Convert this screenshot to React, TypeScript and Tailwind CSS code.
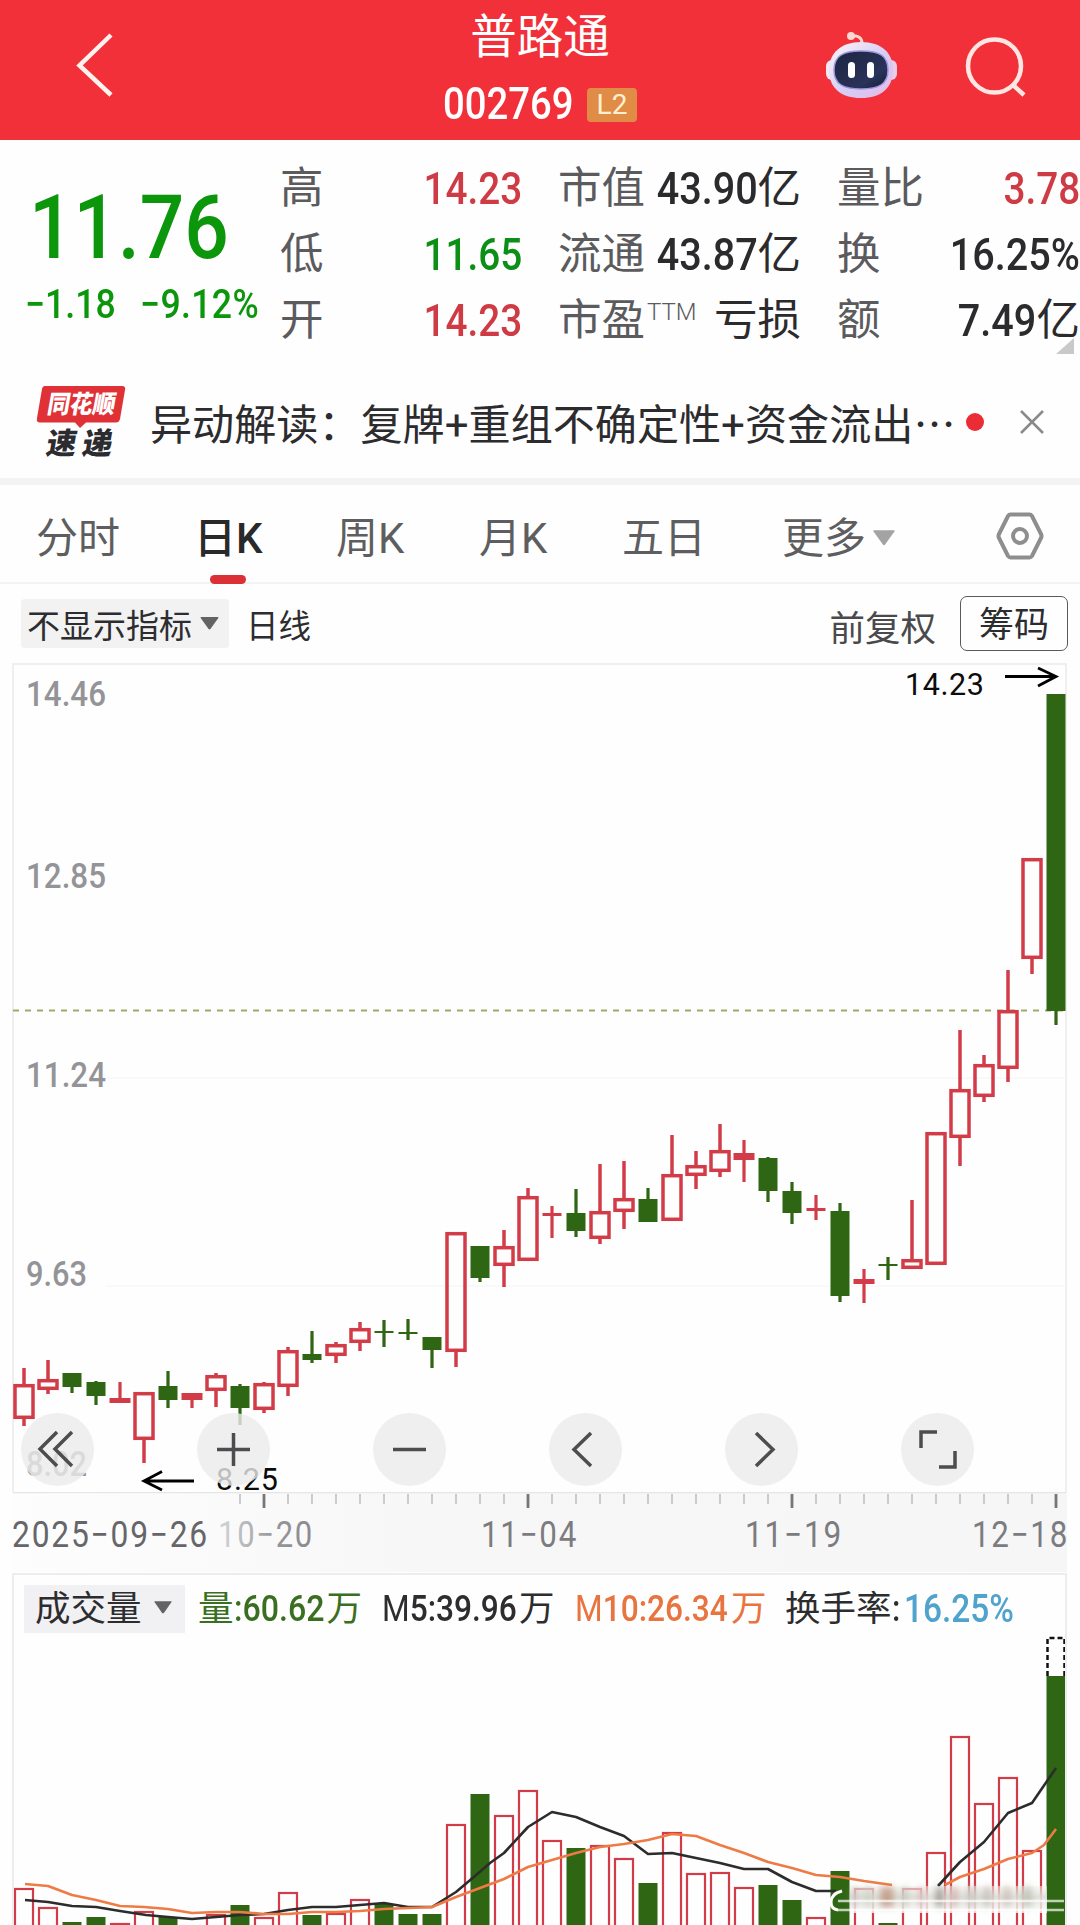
import React from 'react';
import clsx from 'clsx';

type Candle = { up: boolean; high: number; top: number; bottom: number; low: number };

const STEP = 24;
const centerX = (i: number) => STEP + i * STEP;

// [direction, high, body top, body bottom, low]
const RAW: [string, number, number, number, number][] = [
  ['r', 1368, 1384, 1419, 1426],
  ['r', 1360, 1379, 1390, 1394],
  ['g', 1373, 1373, 1387, 1393],
  ['g', 1381, 1382, 1396, 1405],
  ['r', 1382, 1398, 1403, 1403],
  ['r', 1392, 1392, 1440, 1463],
  ['g', 1371, 1386, 1400, 1408],
  ['r', 1393, 1393, 1400, 1408],
  ['r', 1373, 1375, 1391, 1407],
  ['g', 1384, 1386, 1408, 1425],
  ['r', 1382, 1383, 1410, 1413],
  ['r', 1347, 1350, 1387, 1396],
  ['g', 1331, 1354, 1360, 1363],
  ['r', 1342, 1344, 1356, 1363],
  ['r', 1322, 1328, 1343, 1351],
  ['g', 1320, 1331, 1333, 1347],
  ['g', 1319, 1332, 1334, 1340],
  ['g', 1337, 1337, 1350, 1368],
  ['r', 1232, 1232, 1352, 1367],
  ['g', 1246, 1246, 1278, 1282],
  ['r', 1230, 1246, 1266, 1287],
  ['r', 1188, 1196, 1261, 1261],
  ['r', 1206, 1213, 1216, 1238],
  ['g', 1189, 1213, 1231, 1237],
  ['r', 1164, 1211, 1239, 1244],
  ['r', 1161, 1198, 1212, 1229],
  ['g', 1188, 1199, 1222, 1222],
  ['r', 1135, 1174, 1221, 1221],
  ['r', 1151, 1165, 1176, 1189],
  ['r', 1124, 1150, 1172, 1177],
  ['r', 1140, 1153, 1160, 1182],
  ['g', 1157, 1158, 1191, 1202],
  ['g', 1182, 1191, 1213, 1224],
  ['r', 1195, 1208, 1211, 1220],
  ['g', 1203, 1211, 1296, 1302],
  ['r', 1269, 1279, 1284, 1303],
  ['g', 1257, 1264, 1266, 1280],
  ['r', 1200, 1259, 1269, 1269],
  ['r', 1132, 1132, 1265, 1265],
  ['r', 1030, 1089, 1138, 1166],
  ['r', 1055, 1064, 1097, 1102],
  ['r', 970, 1010, 1069, 1082],
  ['r', 858, 858, 959, 974],
  ['g', 694, 694, 1011, 1025],
];

const CANDLES: Candle[] = RAW.map(([d, high, top, bottom, low]) => ({ up: d === 'r', high, top, bottom, low }));

const VOLUME_TOPS = [
  1888, 1907, 1922, 1917, 1923, 1911, 1917, 1925, 1914, 1905, 1917, 1892, 1915, 1913, 1899, 1904, 1914, 1914, 1824,
  1794, 1815, 1790, 1840, 1848, 1845, 1858, 1883, 1832, 1873, 1872, 1887, 1885, 1900, 1917, 1871, 1888, 1923, 1888,
  1852, 1736, 1803, 1777, 1850, 1676,
];

const MA5_A =
  '25,1900 48,1902 72,1906 96,1907 120,1911 146,1915 168,1917 192,1919 216,1917 240,1915 264,1914 288,1910 312,1907 336,1907 360,1905 384,1903 408,1907 432,1907 456,1892 475,1876 490,1863 504,1853 528,1827 552,1812 576,1817 600,1827 624,1836 648,1854 672,1853 696,1858 720,1863 744,1869 768,1869 792,1882 816,1891 836,1891';
const MA5_B = '938,1886 960,1862 984,1842 1008,1813 1032,1803 1056,1768';
const MA10_A =
  '25,1884 48,1886 72,1895 96,1900 120,1906 144,1907 168,1909 192,1913 216,1912 240,1912 264,1914 288,1914 312,1912 336,1912 360,1911 384,1909 408,1908 432,1907 456,1897 480,1888 504,1879 528,1867 552,1860 576,1853 600,1847 624,1844 648,1840 672,1834 696,1836 720,1845 744,1853 768,1862 792,1868 816,1875 840,1877 864,1881 892,1885';
const MA10_B = '945,1885 960,1877 984,1869 1008,1859 1032,1853 1044,1845 1056,1829';

// [x, width, colour] of the soft streaks at the foot of the volume pane
const STREAKS: [number, number, string][] = [
  [853, 4, '#b9a8a6'],
  [864, 8, '#c5cbbb'],
  [880, 14, '#b98d74'],
  [902, 6, '#b9bcb0'],
  [918, 6, '#d8b4b4'],
  [937, 5, '#6d5a54'],
  [950, 8, '#cda7a3'],
  [966, 10, '#c4c3bb'],
  [983, 8, '#bdb5af'],
  [1003, 8, '#c8b6b0'],
  [1022, 10, '#b9bbae'],
];

const RED = '#d23c48';
const GREEN = '#2f6613';

// Digits are set narrow; the outer box keeps the condensed width in the flow.
function Num({ children, className, right = false }: { children: React.ReactNode; className?: string; right?: boolean }) {
  return (
    <span className={clsx('inline-flex shrink-0 whitespace-nowrap font-medium', right ? 'justify-end' : 'justify-start', className)}>
      <span className={clsx('inline-block scale-x-[.88]', right ? 'origin-right' : 'origin-left')}>{children}</span>
    </span>
  );
}

function Caret({ className }: { className?: string }) {
  return (
    <svg viewBox="0 0 20 14" className={className} fill="currentColor">
      <path d="M1 0H19Q20 0 19.5 1L11 13Q10 14 9 13L.5 1Q0 0 1 0Z" />
    </svg>
  );
}

function Header() {
  return (
    <header className="flex h-[140px] items-start bg-[#f23039] text-white">
      <svg className="ml-[60px] h-[140px] w-[70px]" viewBox="60 0 70 140" fill="none" stroke="#fff3f0" strokeWidth="4.5">
        <path d="M111 35L79.500 65.500L111 95" />
      </svg>
      <div className="ml-[313px] flex w-[194px] flex-col items-center">
        <div className="mt-[10px] text-[46.500px] leading-[54px]">普路通</div>
        <div className="mt-[15px] flex items-center gap-[14px]">
          <Num className="w-[130px] text-[43.500px] leading-[52px]">002769</Num>
          <span className="flex h-[34px] w-[50px] items-center justify-center rounded-[4px] bg-[#e08c47] text-[28px] leading-none text-[#fff1d2]">
            L2
          </span>
        </div>
      </div>
      <svg className="ml-auto mr-[40px] h-[140px] w-[240px]" viewBox="800 0 240 140" fill="none">
        <defs>
          <linearGradient id="shell" x1="0" y1="0" x2="1" y2="1">
            <stop offset="0" stopColor="#fff5f8" />
            <stop offset=".55" stopColor="#d5cdf5" />
            <stop offset="1" stopColor="#e5b9e6" />
          </linearGradient>
          <linearGradient id="visor" x1="0" y1="0" x2="1" y2="1">
            <stop offset="0" stopColor="#1b2441" />
            <stop offset=".7" stopColor="#2a3358" />
            <stop offset="1" stopColor="#141b38" />
          </linearGradient>
        </defs>
        <path d="M862 43C862 38 858 35 851 36" stroke="#ffd6d0" strokeWidth="3" />
        <circle cx="851" cy="36" r="4" fill="#ffd6d0" />
        <rect x="826" y="60" width="12" height="20" rx="6" fill="#f6e6f3" />
        <rect x="885" y="60" width="12" height="20" rx="6" fill="#e9cdea" />
        <path d="M861 42C882 42 893 53 893 70C893 88 881 98 861 98C841 98 829 88 829 70C829 53 841 42 861 42Z" fill="url(#shell)" />
        <path
          d="M861 51C880 51 888 56 888 70C888 84 879 89 861 89C843 89 834 84 834 70C834 56 843 51 861 51Z"
          fill="url(#visor)"
          stroke="#9a95dc"
          strokeWidth="1.500"
        />
        <rect x="848" y="62" width="7" height="16" rx="3.500" fill="#fff" />
        <rect x="867" y="62" width="7" height="16" rx="3.500" fill="#fff" />
        <circle cx="994.500" cy="66" r="26.500" stroke="#ffe6e2" strokeWidth="4.500" />
        <path d="M1013 85L1024 95" stroke="#ffe6e2" strokeWidth="4.500" />
      </svg>
    </header>
  );
}

function Quote() {
  const label = 'text-[#5b5b5e]';
  const row = 'flex h-[66px] items-center justify-between';
  return (
    <section className="relative flex h-[222px] pt-[16px] text-[43.500px] leading-[66px] text-[#2b2b2e]">
      <div className="w-[280px] text-[#0b960b]">
        <Num className="ml-[29px] mt-[24px] w-[204px] text-[89px] leading-[96px]">11.76</Num>
        <div className="mt-[4px] flex pl-[25px] text-[40.500px] leading-[46px]">
          <Num className="w-[115px]">−1.18</Num>
          <Num className="w-[120px] tracking-[.4px]">−9.12%</Num>
        </div>
      </div>
      <div className="w-[242px]">
        <div className={row}>
          <span className={label}>高</span>
          <Num right className="text-[44px] text-[#cf3b45]">14.23</Num>
        </div>
        <div className={row}>
          <span className={label}>低</span>
          <Num right className="text-[44px] text-[#0b8f16]">11.65</Num>
        </div>
        <div className={row}>
          <span className={label}>开</span>
          <Num right className="text-[44px] text-[#cf3b45]">14.23</Num>
        </div>
      </div>
      <div className="ml-[36px] w-[243px]">
        <div className={row}>
          <span className={label}>市值</span>
          <span className="flex">
            <Num right className="w-[99px] text-[45px]">43.90</Num>亿
          </span>
        </div>
        <div className={row}>
          <span className={label}>流通</span>
          <span className="flex">
            <Num right className="w-[99px] text-[45px]">43.87</Num>亿
          </span>
        </div>
        <div className={row}>
          <span className={clsx(label, 'flex')}>
            市盈<span className="-mt-[9px] ml-[2px] text-[24px] font-light">TTM</span>
          </span>
          亏损
        </div>
      </div>
      <div className="ml-[36px] w-[243px]">
        <div className={row}>
          <span className={label}>量比</span>
          <Num right className="text-[44px] text-[#cf3b45]">3.78</Num>
        </div>
        <div className={row}>
          <span className={label}>换</span>
          <Num right className="text-[45px]">16.25%</Num>
        </div>
        <div className={row}>
          <span className={label}>额</span>
          <span className="flex">
            <Num right className="w-[80px] text-[45px]">7.49</Num>亿
          </span>
        </div>
      </div>
      <svg className="absolute right-[6px] top-[198px] h-4 w-[18px]" viewBox="0 0 18 16">
        <path d="M18 0V16H0Z" fill="#c9c9c9" />
      </svg>
    </section>
  );
}

function Notice() {
  return (
    <section className="flex h-[116px] items-start pl-9">
      <svg className="mt-[22px] h-[78px] w-[92px]" viewBox="36 384 92 78">
        <path d="M45 386H122Q126 386 125 390L120 419Q119 422.500 116 422.500H86L80 428L75 422.500H40Q36 422.500 37 418L42 389Q42.500 386 45 386Z" fill="#e03137" />
        <text x="47" y="413" fontSize="25" fontWeight="900" fill="#fff" textLength="68" lengthAdjust="spacingAndGlyphs" transform="translate(72 0) skewX(-10)">
          同花顺
        </text>
        <text x="47" y="454" fontSize="30" fontWeight="900" fill="#2b2b30" textLength="66" lengthAdjust="spacing" transform="translate(78 0) skewX(-10)">
          速递
        </text>
      </svg>
      <div className="ml-[22px] mt-[27px] w-[812px] whitespace-nowrap text-[42.100px] leading-[66px] text-[#2c2c2e]">
        异动解读：复牌+重组不确定性+资金流出
        <span className="font-['Noto_Sans_CJK_SC']">…</span>
      </div>
      <span className="ml-[4px] mt-[51px] size-[18px] rounded-full bg-[#ea2c36]" />
      <svg className="ml-9 mt-[48px] size-6" viewBox="0 0 24 24" stroke="#8a8a8a" strokeWidth="2.500">
        <path d="M1 1L23 23M23 1L1 23" />
      </svg>
    </section>
  );
}

const TABS = [
  { name: '分时', width: 'w-[158px]' },
  { name: '日K', width: 'w-[142px]' },
  { name: '周K', width: 'w-[143px]' },
  { name: '月K', width: 'w-[143px]' },
  { name: '五日', width: 'w-[160px]' },
];

function Tabs() {
  return (
    <nav className="flex h-[99px] items-start border-b-2 border-[#f3f3f3] pl-9 text-[42px] leading-[60px] text-[#5e5e60]">
      {TABS.map((t, i) => (
        <div key={t.name} className={clsx('pt-[24px]', t.width, i === 1 && 'font-medium text-[#29292c]')}>
          {t.name}
          {i === 1 && <div className="ml-[16px] mt-[6px] h-[9px] w-9 rounded-full bg-[#db3036]" />}
        </div>
      ))}
      <div className="flex w-[213px] items-center pt-[24px]">
        更多
        <Caret className="-mt-[2px] ml-[7px] h-[18px] w-[22px] text-[#a3a3a3]" />
      </div>
      <svg className="mt-[27px] h-[48px] w-[50px]" viewBox="0 0 50 48" fill="none" stroke="#8e8e8e" strokeWidth="4">
        <path d="M15.500 2.500H34.500Q36 2.500 37 4L46 22Q47 24 46 26L37 44Q36 45.500 34.500 45.500H15.500Q14 45.500 13 44L4 26Q3 24 4 22L13 4Q14 2.500 15.500 2.500Z" />
        <circle cx="25" cy="24" r="7" />
      </svg>
    </nav>
  );
}

function Toolbar() {
  return (
    <div className="flex h-[79px] items-center pl-[21px] pr-[12px] text-[#2d2d2f]">
      <div className="flex h-[49px] w-[208px] items-center rounded bg-[#f2f2f3] pl-[6px] pt-[6px] text-[33px]">
        不显示指标
        <Caret className="-mt-[6px] ml-[8px] h-[13px] w-[19px] text-[#636363]" />
      </div>
      <span className="ml-[17px] mt-[7px] text-[32.500px]">日线</span>
      <span className="ml-auto mt-[13px] text-[35.500px] text-[#4a4a4c]">前复权</span>
      <span className="ml-[24px] flex h-[55px] w-[108px] items-center justify-center rounded-[7px] border-[1.5px] border-[#5a5a5a] pt-[6px] text-[35px]">
        筹码
      </span>
    </div>
  );
}

function CandleShape({ c, x }: { c: Candle; x: number }) {
  const h = c.bottom - c.top;
  const color = c.up ? RED : GREEN;
  if (!c.up || h < 8) {
    const w = c.up && h > 3 ? 21 : 19;
    return (
      <g fill={color}>
        <rect x={x - 1.6} y={c.high} width="3.2" height={c.low - c.high} />
        <rect x={x - w / 2} y={c.top} width={w} height={h} />
      </g>
    );
  }
  return (
    <g fill="none" stroke={color} strokeWidth="3.5">
      <path d={`M${x} ${c.high}V${c.top}M${x} ${c.bottom}V${c.low}`} />
      <rect x={x - 9} y={c.top + 1.7} width="18" height={h - 3.4} />
    </g>
  );
}

const PRICES = [
  { text: '14.46', y: 706, w: 79 },
  { text: '12.85', y: 888, w: 79 },
  { text: '11.24', y: 1087, w: 79 },
  { text: '9.63', y: 1286, w: 60 },
  { text: '8.02', y: 1476, w: 60 },
];

const BUTTONS = [
  'M36 19L19 36L36 53M51 19L34 36L51 53',
  'M36.500 20V53M20 36.500H53',
  'M20 36.500H53',
  'M42 20L25 36.500L42 53',
  'M31 20L48 36.500L31 53',
  'M20 35V19H36M38 54H54V38',
];

function KChart() {
  return (
    <div className="relative h-[829px]">
      <svg className="block h-[829px] w-full" viewBox="0 663 1080 829">
        <path d="M13 1492V664H1066V1492" fill="none" stroke="#efeff0" strokeWidth="2" />
        <path d="M106 1078H1066M106 1286H1066" stroke="#f7f7f7" strokeWidth="1.500" />
        <g fontSize="35" fill="#949498">
          {PRICES.map((p) => (
            <text key={p.text} x="26" y={p.y} fontWeight="500" textLength={p.w + 1} lengthAdjust="spacingAndGlyphs">
              {p.text}
            </text>
          ))}
        </g>
        <path d="M13 1010.500H1066" stroke="#9aad6c" strokeWidth="1.800" strokeDasharray="6 6" />
        {CANDLES.map((c, i) => (
          <CandleShape key={i} c={c} x={centerX(i)} />
        ))}
        <g stroke="#000" strokeWidth="2.800" fill="none">
          <path d="M1005 676.500H1055M1038 668L1056 676.500L1038 686" />
          <path d="M194 1481H145M162 1471.500L144 1481L162 1490" />
        </g>
        <g fontSize="30.500" fill="#0c0c0c">
          <text x="905" y="695" textLength="79">14.23</text>
          <text x="216" y="1490" textLength="62">8.25</text>
        </g>
      </svg>
      <div className="absolute left-[21px] top-[750px] flex gap-[103px]">
        {BUTTONS.map((d) => (
          <button key={d} type="button" className="size-[73px] rounded-full bg-[#ebebeb]/80">
            <svg viewBox="0 0 73 73" fill="none" stroke="#4d4d4f" strokeWidth="3.500">
              <path d={d} />
            </svg>
          </button>
        ))}
      </div>
    </div>
  );
}

function DateAxis() {
  return (
    <svg className="block h-[81px] w-full" viewBox="0 1492 1080 81">
      <defs>
        <linearGradient id="axis" x1="0" y1="0" x2="1" y2="0">
          <stop offset="0" stopColor="#fdfdfd" />
          <stop offset=".4" stopColor="#f7f7f8" />
          <stop offset="1" stopColor="#f6f6f6" />
        </linearGradient>
        <linearGradient id="first" x1="0" y1="0" x2="1" y2="0">
          <stop offset="0" stopColor="#d6d6d8" />
          <stop offset=".6" stopColor="#96969a" />
          <stop offset="1" stopColor="#8a8a8e" />
        </linearGradient>
      </defs>
      <rect x="13" y="1492" width="1054" height="80" fill="url(#axis)" />
      <path d="M13 1492.500H1066" stroke="#e6e6e6" strokeWidth="1.500" />
      {CANDLES.map((_, i) => {
        if (i < 9) return null;
        const major = (i + 1) % 11 === 0;
        return (
          <path
            key={i}
            d={`M${centerX(i)} 1494V${major ? 1508 : 1504}`}
            stroke={major ? '#77777a' : '#b4b4b6'}
            strokeWidth={major ? 2.8 : 1.3}
          />
        );
      })}
      <g fontSize="36" fill="#7c7c80" letterSpacing="2">
        <text x="12" y="1547" fill="#66666a" textLength="197" lengthAdjust="spacingAndGlyphs">2025−09−26</text>
        <text x="218" y="1547" fill="url(#first)" textLength="96" lengthAdjust="spacingAndGlyphs">10−20</text>
        <text x="481" y="1547" textLength="97" lengthAdjust="spacingAndGlyphs">11−04</text>
        <text x="745" y="1547" textLength="98" lengthAdjust="spacingAndGlyphs">11−19</text>
        <text x="972" y="1547" textLength="97" lengthAdjust="spacingAndGlyphs">12−18</text>
      </g>
    </svg>
  );
}

function Volume() {
  return (
    <section className="ml-[12px] mr-[13px] h-[352px] overflow-hidden border-2 border-b-0 border-[#efecf0]">
      <div className="flex h-[59px] items-center pl-[10px] pt-[8px] text-[35.500px] leading-[48px] text-[#2d2d2f]">
        <div className="flex h-[48px] w-[161px] shrink-0 items-center bg-[#f1f0f3] pl-[11px]">
          成交量
          <Caret className="-mt-[2px] ml-[12px] h-[13px] w-[18px] text-[#636363]" />
        </div>
        <span className="ml-[13px] flex w-[184px] shrink-0 text-[#3a6f22]">
          量<Num className="w-[93px] text-[36.500px]">:60.62</Num>万
        </span>
        <span className="flex w-[193px] shrink-0">
          <Num className="w-[137px] text-[36px]">
            <span className="font-normal">M</span>5:39.96
          </Num>
          万
        </span>
        <span className="flex w-[210px] shrink-0 text-[#e8743f]">
          <Num className="w-[156px] text-[36px]">
            <span className="font-normal">M</span>10:26.34
          </Num>
          万
        </span>
        换手率
        <Num className="w-[12px] text-[36px]">:</Num>
        <Num className="text-[38px] text-[#4fa3cc]">16.25%</Num>
      </div>
      <svg className="block h-[291px] w-[1051px]" viewBox="14 1634 1051 291">
        <defs>
          <linearGradient id="haze" x1="0" y1="0" x2="0" y2="1">
            <stop offset="0" stopColor="#f4f2ee" stopOpacity=".5" />
            <stop offset=".4" stopColor="#dcdfd8" stopOpacity=".9" />
            <stop offset="1" stopColor="#fff" stopOpacity=".75" />
          </linearGradient>
          <filter id="soft" x="-.1" y="-.5" width="1.2" height="2">
            <feGaussianBlur stdDeviation="3.5 3.5" />
          </filter>
        </defs>
        {VOLUME_TOPS.map((top, i) => {
          const x = centerX(i);
          if (i === 7) return null;
          return CANDLES[i].up ? (
            <rect key={i} x={x - 9} y={top + 1} width="18" height={1940 - top} fill="none" stroke={RED} strokeWidth="2.2" />
          ) : (
            <rect key={i} x={x - 9.5} y={top} width="19" height={1940 - top} fill={GREEN} />
          );
        })}
        <path d="M1047.500 1676V1638H1064.500V1676" fill="none" stroke="#111" strokeWidth="2.500" strokeDasharray="5 3" />
        <g fill="none" strokeWidth="2.600" strokeLinejoin="round">
          <polyline points={MA5_A} stroke="#2c2c2c" />
          <polyline points={MA5_B} stroke="#2c2c2c" />
          <polyline points={MA10_A} stroke="#ee7b45" />
          <polyline points={MA10_B} stroke="#ee7b45" />
        </g>
        <rect x="850" y="1886" width="197" height="27" fill="url(#haze)" />
        <g filter="url(#soft)" opacity=".75">
          {STREAKS.map(([x, w, fill]) => (
            <rect key={x} x={x} y="1887" width={w} height="20" fill={fill} />
          ))}
        </g>
        <path d="M838 1901H1064M838 1910H1064" stroke="#fff" strokeOpacity=".7" strokeWidth="2.500" />
        <path d="M842 1891Q831 1894 831 1902Q831 1909 838 1910" fill="none" stroke="#fff" strokeWidth="3" />
      </svg>
    </section>
  );
}

export default function App() {
  return (
    <main className="flex h-[1925px] w-[1080px] flex-col overflow-hidden bg-[#fefefe] font-[Roboto,'Noto_Sans_CJK_SC',sans-serif]">
      <Header />
      <Quote />
      <Notice />
      <div className="h-[7px] shrink-0 bg-[#f4f3f3]" />
      <Tabs />
      <Toolbar />
      <KChart />
      <DateAxis />
      <Volume />
    </main>
  );
}
